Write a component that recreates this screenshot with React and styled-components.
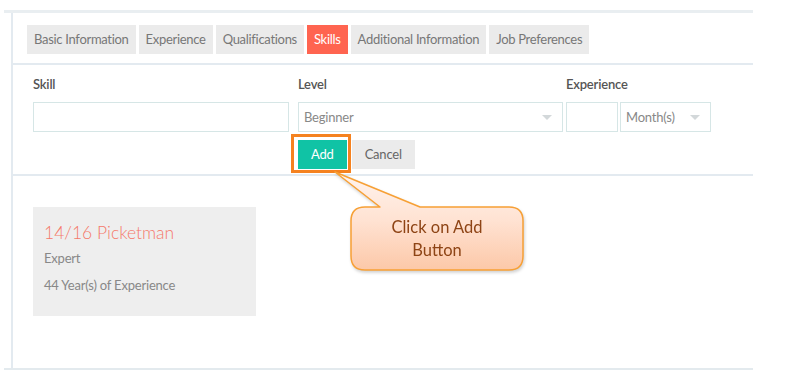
import React from 'react';
import styled, { createGlobalStyle } from 'styled-components';

const GlobalStyle = createGlobalStyle`
  body {
    margin: 0;
    background: #fff;
    font-family: 'Lato', 'Liberation Sans', sans-serif;
  }
`;

const tabs = [
  'Basic Information',
  'Experience',
  'Qualifications',
  'Skills',
  'Additional Information',
  'Job Preferences',
];

const App = () => {
  return (
    <Page>
      <GlobalStyle />
      <Panel>
        <Inner>
          <TabBar>
            {tabs.map((t) => (
              <Tab key={t} active={t === 'Skills'}>
                {t}
              </Tab>
            ))}
          </TabBar>

          <FormSection>
            <Fields>
              <Field width={256} gap={9}>
                <Label>Skill</Label>
                <Input />
              </Field>
              <Field width={265} gap={3}>
                <Label>Level</Label>
                <Select>
                  <span>Beginner</span>
                  <Caret />
                </Select>
              </Field>
              <Field width={145}>
                <Label>Experience</Label>
                <ExpRow>
                  <Input width={52} />
                  <Select width={91}>
                    <span>Month(s)</span>
                    <Caret />
                  </Select>
                </ExpRow>
              </Field>
            </Fields>
            <Buttons>
              <AddWrap>
                <Highlight />
                <Button primary>Add</Button>
              </AddWrap>
              <Button>Cancel</Button>
            </Buttons>
          </FormSection>

          <CardSection>
            <Card>
              <CardTitle>14/16 Picketman</CardTitle>
              <CardText>Expert</CardText>
              <CardText>44 Year(s) of Experience</CardText>
            </Card>
          </CardSection>
        </Inner>
      </Panel>

      <Callout>
        <svg width="200" height="112" viewBox="0 0 200 112">
          <defs>
            <linearGradient id="calloutFill" x1="0" y1="0" x2="0" y2="1">
              <stop offset="0" stopColor="#fff4ee" />
              <stop offset="0.5" stopColor="#ffe2d2" />
              <stop offset="1" stopColor="#fcc8a8" />
            </linearGradient>
          </defs>
          <path
            d="M 35 42 L 50 42 L 5 7 L 90 42 L 179 42 Q 193 42 193 56 L 193 91 Q 193 105 179 105 L 35 105 Q 21 105 21 91 L 21 56 Q 21 42 35 42 Z"
            fill="url(#calloutFill)"
            stroke="#f7a035"
            strokeWidth="1.5"
            strokeLinejoin="round"
          />
        </svg>
        <CalloutText>
          Click on Add
          <br />
          Button
        </CalloutText>
      </Callout>
    </Page>
  );
};

const Page = styled.div`
  position: relative;
  width: 786px;
  height: 391px;
  padding-top: 10px;
  box-sizing: border-box;
`;

const Panel = styled.div`
  margin-left: 4px;
  width: 749px;
  border-top: 3px solid #e9eef1;
  border-bottom: 2px solid #e3eaee;
`;

const Inner = styled.div`
  margin-left: 7px;
  border-left: 2px solid #e3eaf0;
`;

const TabBar = styled.div`
  display: flex;
  gap: 3px;
  padding: 12px 0 9px 14px;
  border-bottom: 2px solid #e3eaf0;
`;

const Tab = styled.div`
  height: 29px;
  line-height: 29px;
  padding: 0 7px;
  font-size: 13px;
  letter-spacing: -0.3px;
  color: ${(p) => (p.active ? '#fff' : '#777')};
  background: ${(p) => (p.active ? '#ff6450' : '#ebebeb')};
`;

const FormSection = styled.div`
  padding: 11px 0 5px 20px;
  border-bottom: 2px solid #e3eaf0;
`;

const Fields = styled.div`
  display: flex;
`;

const Field = styled.div`
  width: ${(p) => p.width}px;
  margin-right: ${(p) => p.gap || 0}px;
`;

const Label = styled.div`
  font-size: 13px;
  font-weight: 600;
  letter-spacing: -0.2px;
  color: #555;
  line-height: 17px;
  margin-bottom: 9px;
`;

const Input = styled.div`
  box-sizing: border-box;
  height: 30px;
  width: ${(p) => (p.width ? `${p.width}px` : '100%')};
  border: 1px solid #d6e6e6;
  background: #fff;
`;

const Select = styled.div`
  box-sizing: border-box;
  height: 30px;
  width: ${(p) => (p.width ? `${p.width}px` : '100%')};
  border: 1px solid #d6e6e6;
  display: flex;
  align-items: center;
  justify-content: space-between;
  padding: 0 10px 0 5px;
  font-size: 13px;
  letter-spacing: -0.2px;
  color: #888;
`;

const Caret = styled.span`
  width: 0;
  height: 0;
  border-left: 5px solid transparent;
  border-right: 5px solid transparent;
  border-top: 5px solid #d3d8da;
`;

const ExpRow = styled.div`
  display: flex;
  gap: 2px;
`;

const Buttons = styled.div`
  display: flex;
  gap: 5px;
  margin: 8px 0 0 265px;
`;

const AddWrap = styled.div`
  position: relative;
`;

const Highlight = styled.div`
  position: absolute;
  top: -6px;
  left: -7px;
  right: -4px;
  bottom: -4px;
  border: 3px solid #f58220;
`;

const Button = styled.div`
  position: relative;
  height: 29px;
  line-height: 29px;
  padding: 0 ${(p) => (p.primary ? '13px' : '13px')};
  font-size: 13px;
  letter-spacing: -0.2px;
  color: ${(p) => (p.primary ? '#fff' : '#666')};
  background: ${(p) => (p.primary ? '#10c3a5' : '#ebebeb')};
`;

const CardSection = styled.div`
  padding: 31px 0 52px 20px;
`;

const Card = styled.div`
  box-sizing: border-box;
  width: 223px;
  height: 109px;
  background: #eeeeee;
  padding: 15px 11px 0;
`;

const CardTitle = styled.div`
  font-size: 17.5px;
  font-weight: 300;
  color: #f5796a;
  line-height: 22px;
  margin-bottom: 6px;
`;

const CardText = styled.div`
  font-size: 13px;
  letter-spacing: -0.2px;
  color: #888;
  line-height: 16px;
  margin-bottom: 11px;
`;

const Callout = styled.div`
  position: absolute;
  left: 330px;
  top: 165px;
  width: 200px;
  height: 112px;
  filter: drop-shadow(1px 2px 1.5px rgba(0, 0, 0, 0.18));

  svg {
    display: block;
  }
`;

const CalloutText = styled.div`
  position: absolute;
  left: 21px;
  top: 42px;
  width: 172px;
  height: 63px;
  display: flex;
  align-items: center;
  justify-content: center;
  text-align: center;
  font-size: 16.5px;
  line-height: 23px;
  color: #8e4415;
`;

export default App;
